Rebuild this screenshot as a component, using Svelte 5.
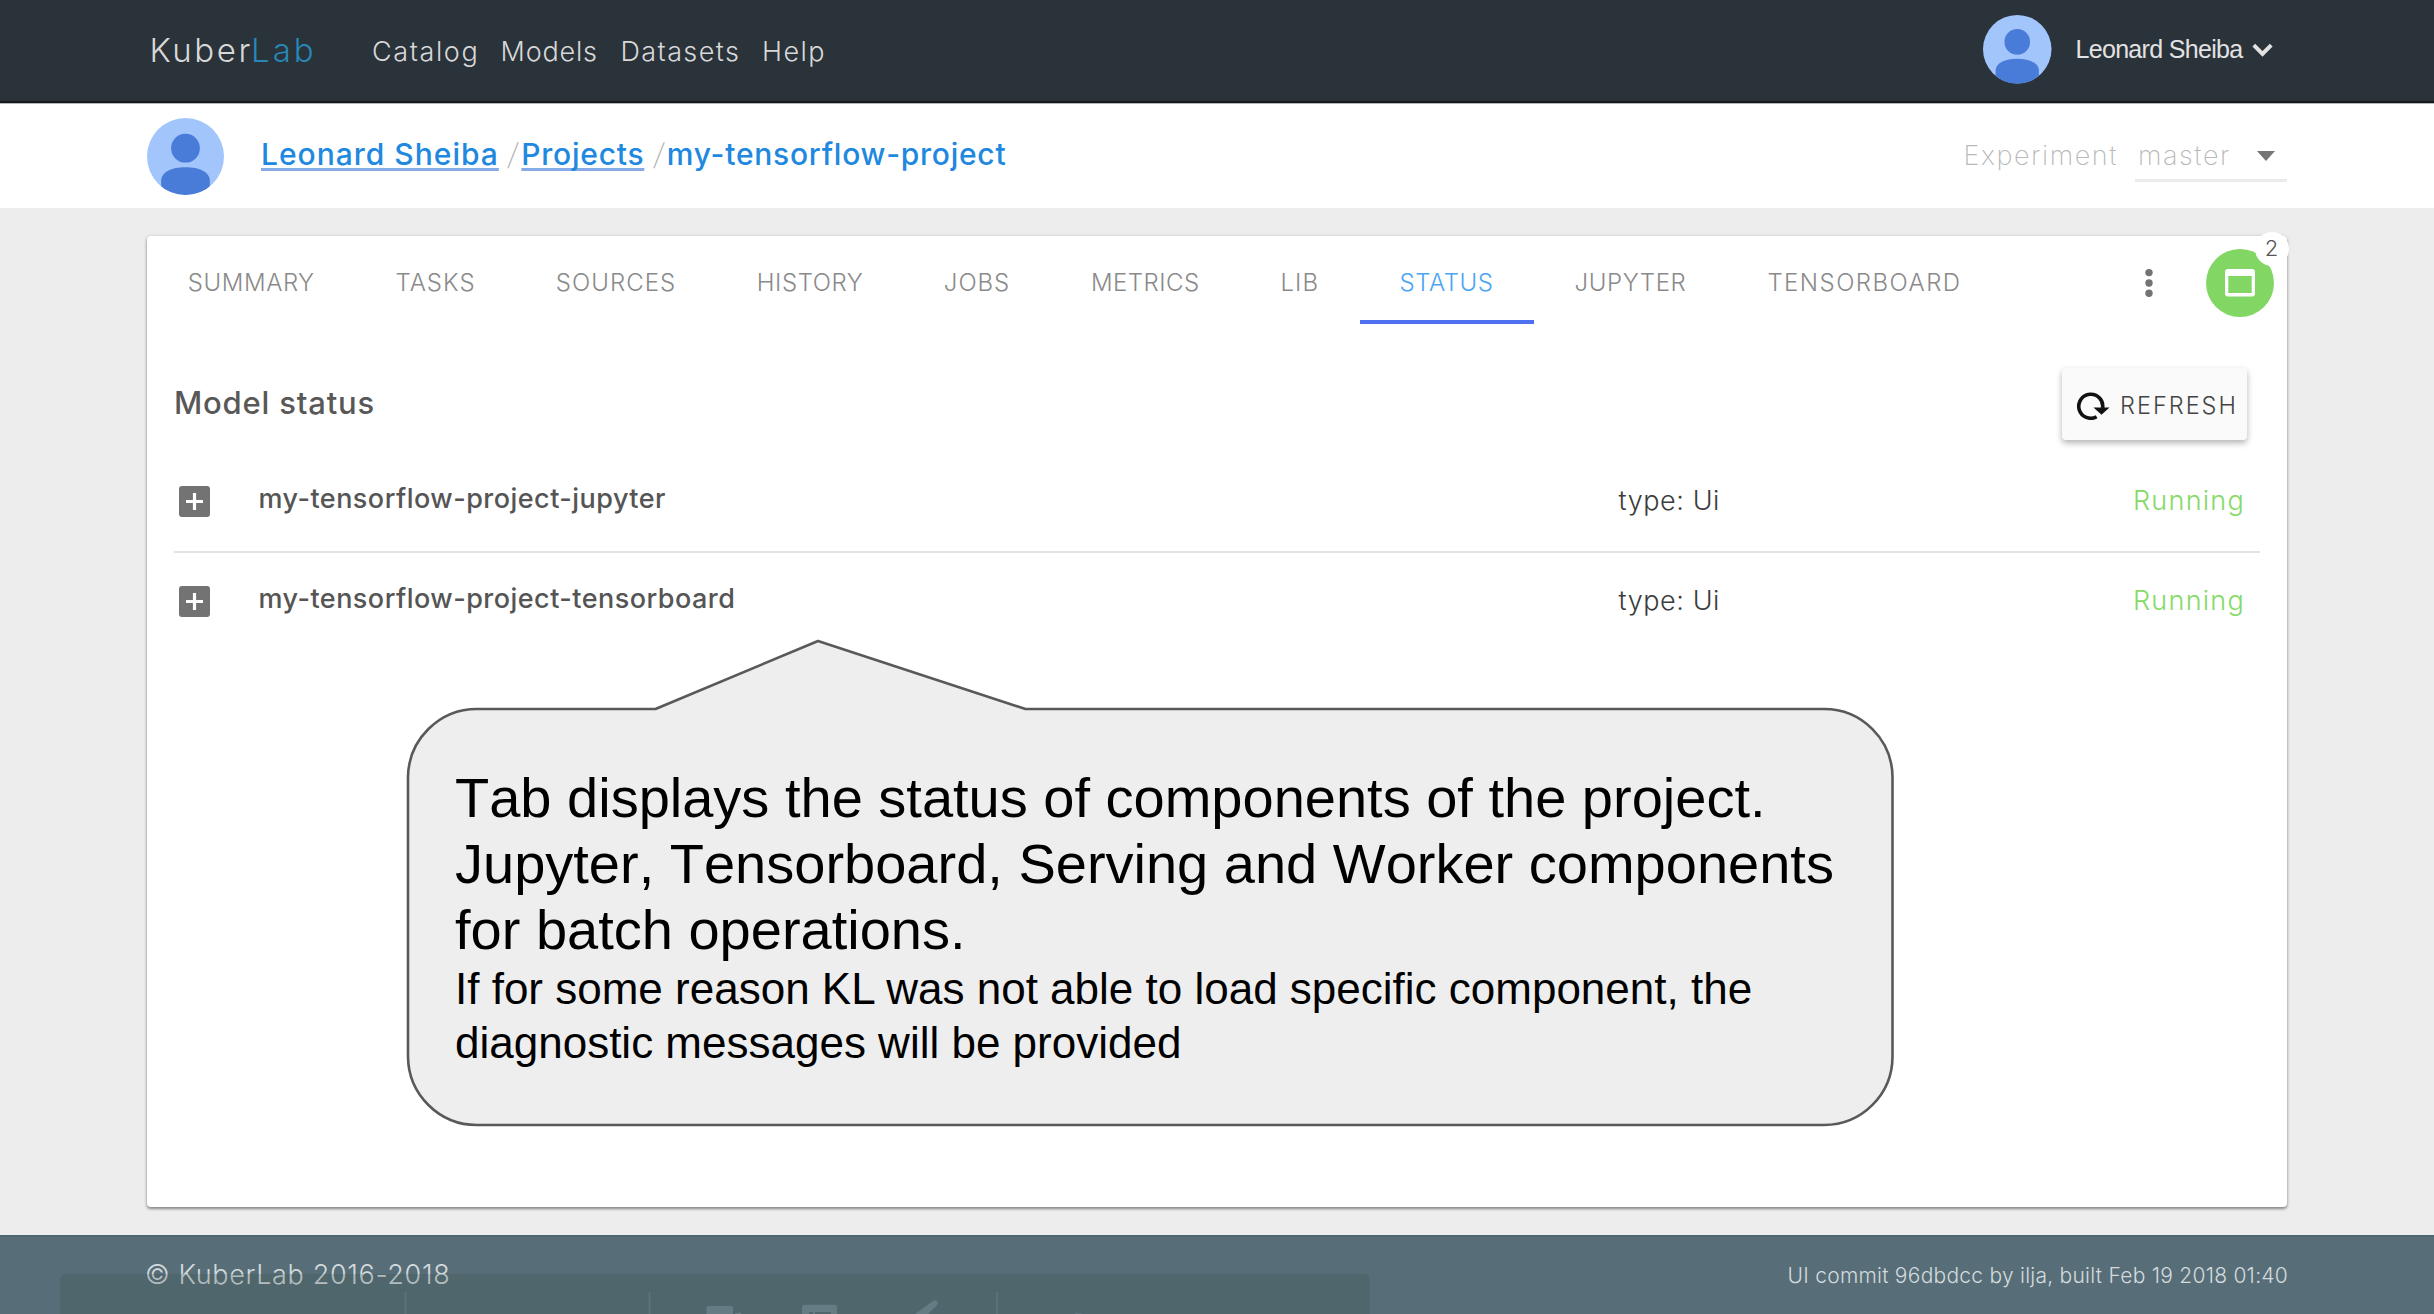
<script>
  const navLinks = [
    { label: 'Catalog', cls: 'catalog' },
    { label: 'Models', cls: 'models' },
    { label: 'Datasets', cls: 'datasets' },
    { label: 'Help', cls: 'help' }
  ];

  const tabs = [
    { label: 'SUMMARY', spacing: 0.57 },
    { label: 'TASKS', spacing: 1.02 },
    { label: 'SOURCES', spacing: 1.05 },
    { label: 'HISTORY', spacing: 0.56 },
    { label: 'JOBS', spacing: 0.93 },
    { label: 'METRICS', spacing: 0.48 },
    { label: 'LIB', spacing: 1.08 },
    { label: 'STATUS', spacing: 0.56, active: true },
    { label: 'JUPYTER', spacing: 0.61 },
    { label: 'TENSORBOARD', spacing: 1.46 }
  ];

  const components = [
    { name: 'my-tensorflow-project-jupyter', type: 'Ui', state: 'Running' },
    { name: 'my-tensorflow-project-tensorboard', type: 'Ui', state: 'Running' }
  ];
</script>

{#snippet avatar(id)}
  <svg class="avatar" viewBox="0 0 68 68" aria-hidden="true">
    <clipPath {id}><circle cx="34" cy="34" r="34" /></clipPath>
    <circle cx="34" cy="34" r="34" fill="#a2c5fb" />
    <g clip-path="url(#{id})" fill="#497bd9">
      <circle cx="34" cy="26.7" r="12.7" />
      <path d="M12.5 70V55.5C12.5 47.5 22 43.5 34 43.5S55.5 47.5 55.5 55.5V70Z" />
    </g>
  </svg>
{/snippet}

<div class="page">
  <header class="nav">
    <div class="logo"><span>Kuber</span><span class="lab">Lab</span></div>
    <nav class="links">
      {#each navLinks as link}
        <span class={link.cls}>{link.label}</span>
      {/each}
    </nav>
    <div class="user">
      {@render avatar('user-clip')}
      <span class="user-name">Leonard Sheiba</span>
      <svg class="chevron" viewBox="0 0 21 14" aria-hidden="true">
        <path d="M1.8 2.2 10.5 11 19.2 2.2" fill="none" stroke="#e2e2e2" stroke-width="4" />
      </svg>
    </div>
  </header>

  <section class="subnav">
    {@render avatar('owner-clip')}
    <div class="crumbs">
      <span class="crumb link owner">Leonard Sheiba</span>
      <span class="slash"><i>/</i></span>
      <span class="crumb link">Projects</span>
      <span class="slash"><i>/</i></span>
      <span class="crumb">my-tensorflow-project</span>
    </div>
    <div class="experiment">
      <span class="exp-label">Experiment</span>
      <div class="select">
        <span>master</span>
        <svg class="arrow" viewBox="0 0 18 10" aria-hidden="true"><path d="M0 0h18L9 10z" fill="#757575" /></svg>
      </div>
    </div>
  </section>

  <main>
    <section class="card">
      <div class="tabbar">
        <div class="tabs">
          {#each tabs as tab}
            <div class="tab" class:active={tab.active} style:letter-spacing="{tab.spacing}px">{tab.label}</div>
          {/each}
        </div>
        <div class="actions">
          <svg class="dots" viewBox="0 0 12 30" aria-hidden="true">
            <g fill="#737373"><circle cx="6" cy="4.6" r="3.7" /><circle cx="6" cy="15" r="3.7" /><circle cx="6" cy="25.3" r="3.7" /></g>
          </svg>
          <div class="fab">
            <svg class="window" viewBox="0 0 30 28" aria-hidden="true">
              <path fill="#fff" fill-rule="evenodd" d="M3 0H27Q30 0 30 3V24.5Q30 27.5 27 27.5H3Q0 27.5 0 24.5V3Q0 0 3 0ZM3.3 7V24H26.7V7Z" />
            </svg>
            <span class="badge">2</span>
          </div>
        </div>
      </div>

      <div class="heading">
        <h1>Model status</h1>
        <div class="refresh">
          <svg class="reload" viewBox="0 0 33 28" aria-hidden="true">
            <path d="M19.6 24.7A12 12 0 1 1 25.6 16" fill="none" stroke="#111" stroke-width="3.6" />
            <path d="M16.5 15.5H32.5L24.5 22.8Z" fill="#111" />
          </svg>
          <span>REFRESH</span>
        </div>
      </div>

      <div class="list">
        {#each components as item}
          <div class="row">
            <svg class="expand" viewBox="0 0 31 31" aria-hidden="true">
              <rect width="31" height="31" rx="3" fill="#737373" />
              <path d="M15.5 7V24M7 15.5H24" stroke="#fff" stroke-width="3.2" />
            </svg>
            <span class="name">{item.name}</span>
            <span class="type">type: {item.type}</span>
            <span class="state">{item.state}</span>
          </div>
        {/each}
      </div>
    </section>
  </main>

  <footer>
    <span class="copyright">© KuberLab 2016-2018</span>
    <span class="build">UI commit 96dbdcc by ilja, built Feb 19 2018 01:40</span>
    <div class="toolbar">
      <svg viewBox="0 0 1310 40" aria-hidden="true">
        <g fill="#5a727c">
          <rect x="344.5" y="18" width="2" height="22" />
          <rect x="588.5" y="18" width="2" height="22" />
          <rect x="936" y="18" width="2" height="22" />
        </g>
        <g fill="#667c84">
          <path d="M646.5 40V34Q646.5 32 648.5 32H671Q673 32 673 34V40Z" />
          <path d="M675 40V39L681 38.6V40Z" />
          <path d="M742 40V33Q742 30.7 744.5 30.7H774.5Q777 30.7 777 33V40H771V38H755V40H753V38H749V40Z" />
          <path d="M855 40 871.5 28Q874 25.5 876.5 26.5Q878.5 28.5 877 31L868 40Z" />
        </g>
        <rect x="1015" y="39" width="7" height="1" fill="#5a727c" />
      </svg>
    </div>
  </footer>

  <aside class="callout">
    <svg class="bubble" viewBox="0 0 1488 488" aria-hidden="true">
      <path
        d="M71 70H249.5L412 2L619.5 70H1418A68.5 68.5 0 0 1 1486.500 138.500V417.500A68.500 68.500 0 0 1 1418 486H71A69 69 0 0 1 2 417.500V138.500A69 69 0 0 1 71 70Z"
        fill="#eeeeee" stroke="#595959" stroke-width="2.6" stroke-linejoin="round" />
    </svg>
    <p class="lead">Tab displays the status of components of the project.<br />Jupyter, Tensorboard, Serving and Worker components<br />for batch operations.</p>
    <p class="detail">If for some reason KL was not able to load specific component, the<br />diagnostic messages will be provided</p>
  </aside>
</div>

<style>
  :global(body) {
    margin: 0;
    background: #ededed;
  }

  .page {
    position: relative;
    width: 2434px;
    height: 1314px;
    display: flex;
    flex-direction: column;
    overflow: hidden;
    background: #ededed;
    font-family: Inter, 'Liberation Sans', sans-serif;
    font-weight: 300;
    font-size: 27px;
    white-space: nowrap;
  }

  svg {
    display: block;
    flex: none;
  }

  /* Top navigation */
  .nav {
    height: 104px;
    box-sizing: border-box;
    padding: 0 161px 4px 149.5px;
    border-bottom: 1px solid #b5b7b8;
    box-shadow: inset 0 -2px 0 #15191c;
    background: #2a323a;
    color: #d8d8d8;
    display: flex;
    align-items: center;
  }

  .logo {
    width: 222.5px;
    font-size: 33px;
    letter-spacing: 2.6px;
  }

  .lab {
    color: #2887b5;
    letter-spacing: 3px;
    margin-left: -2px;
  }

  .links {
    display: flex;
    padding-top: 4px;
  }

  .catalog {
    width: 128.5px;
    letter-spacing: 1.6px;
  }

  .models {
    width: 120px;
    letter-spacing: 0.82px;
  }

  .datasets {
    width: 141.5px;
    letter-spacing: 1.39px;
  }

  .help {
    letter-spacing: 1.4px;
  }

  .user {
    margin-left: auto;
    display: flex;
    align-items: center;
    font-family: 'Liberation Sans', sans-serif;
    font-weight: 400;
    font-size: 25px;
    letter-spacing: -0.68px;
    color: #e2e2e2;
  }

  .user .avatar {
    width: 68.5px;
    height: 68.5px;
    margin-right: 23.5px;
  }

  .chevron {
    width: 21px;
    height: 14px;
    margin-left: 9.5px;
  }

  /* Breadcrumb bar */
  .subnav {
    height: 104px;
    box-sizing: border-box;
    padding: 0 147px;
    background: #fff;
    display: flex;
    align-items: center;
  }

  .subnav .avatar {
    width: 77px;
    height: 77px;
    margin: 1px 37px 0 0;
  }

  .crumbs {
    display: flex;
    align-items: center;
    padding-bottom: 4px;
    font-size: 30px;
    font-weight: 500;
    letter-spacing: 0.75px;
    color: #2088df;
  }

  .link {
    text-decoration: underline;
    text-decoration-color: #86abe8;
    text-decoration-thickness: 2.5px;
    text-decoration-skip-ink: none;
    text-underline-offset: 2.5px;
  }

  .owner {
    letter-spacing: 1px;
  }

  .slash {
    width: 22.5px;
    box-sizing: border-box;
    padding-left: 7px;
    text-align: center;
    font-weight: 200;
    color: #b5b5b5;
  }

  .slash i {
    display: inline-block;
    font-style: normal;
    transform: skewX(-7deg);
  }

  .experiment {
    margin-left: auto;
    display: flex;
    align-items: center;
    font-weight: 200;
    letter-spacing: 1.55px;
    color: #b9b9b9;
  }

  .exp-label {
    margin-right: 17px;
    padding-bottom: 1px;
  }

  .select {
    width: 152px;
    height: 52px;
    box-sizing: border-box;
    padding: 0 12px 0 3px;
    margin-top: -1px;
    border-bottom: 3px solid #ebebeb;
    display: flex;
    align-items: center;
    justify-content: space-between;
  }

  .select span {
    padding-top: 2px;
  }

  .arrow {
    width: 18px;
    height: 10px;
    margin-top: 4px;
  }

  /* Card */
  main {
    height: 1027px;
    box-sizing: border-box;
    padding: 28px 147px;
  }

  .card {
    height: 971px;
    background: #fff;
    border-radius: 4px;
    box-shadow: 0 2px 3px rgba(0, 0, 0, 0.4), 0 0 4px rgba(0, 0, 0, 0.12);
  }

  .tabbar {
    height: 88px;
    display: flex;
  }

  .tabs {
    display: grid;
    grid-template-columns: 208.5px 160px 201px 187px 147px 189.5px 119.5px 174px 194px 274px;
    font-size: 24px;
    color: #8a8a8a;
  }

  .tab {
    height: 88px;
    box-sizing: border-box;
    padding-top: 6px;
    line-height: 82px;
    text-align: center;
  }

  .active {
    color: #4aa5f5;
    box-shadow: inset 0 -4px 0 #4f70f0;
  }

  .actions {
    margin-left: auto;
    padding: 6px 13px 0 0;
    display: flex;
    align-items: center;
    gap: 51px;
  }

  .dots {
    width: 12px;
    height: 30px;
  }

  .fab {
    position: relative;
    width: 68px;
    height: 68px;
    border-radius: 50%;
    background: #82d764;
    display: flex;
    align-items: center;
    justify-content: center;
  }

  .window {
    width: 30px;
    height: 28px;
  }

  .badge {
    position: absolute;
    left: 48.5px;
    top: -17.5px;
    width: 34px;
    height: 34px;
    border-radius: 50%;
    background: #fff;
    color: #555;
    font-size: 22px;
    line-height: 33px;
    text-align: center;
  }

  .heading {
    height: 127px;
    box-sizing: border-box;
    padding: 44px 40px 11px 27px;
    display: flex;
    align-items: center;
    justify-content: space-between;
  }

  h1 {
    margin: 0;
    padding-bottom: 4px;
    font-size: 31px;
    font-weight: 500;
    letter-spacing: 0.8px;
    color: #585858;
  }

  .refresh {
    width: 185px;
    height: 72px;
    box-sizing: border-box;
    padding: 2px 0 0 15px;
    border-radius: 4px;
    background: #fafafa;
    box-shadow: 0 3px 6px rgba(0, 0, 0, 0.3);
    color: #444;
    font-size: 23.5px;
    letter-spacing: 2px;
    display: flex;
    align-items: center;
    gap: 10px;
  }

  .reload {
    width: 33px;
    height: 28px;
    margin-top: 1px;
  }

  .list {
    padding: 0 27px;
  }

  .row {
    height: 100px;
    box-sizing: border-box;
    padding: 0 15px 0 4.5px;
    display: grid;
    grid-template-columns: 80px 1360px auto 1fr;
    align-items: center;
    color: #3c3c3c;
  }

  .row + .row {
    border-top: 2px solid #e3e3e3;
    padding-bottom: 2px;
  }

  .expand {
    width: 31px;
    height: 31px;
  }

  .name {
    padding-bottom: 5px;
    font-weight: 500;
    letter-spacing: 0.47px;
    color: #555;
  }

  .type {
    padding-bottom: 2px;
    letter-spacing: 0.57px;
  }

  .state {
    padding-bottom: 2px;
    text-align: right;
    letter-spacing: 1.25px;
    color: #84da66;
  }

  /* Footer */
  footer {
    position: relative;
    height: 79px;
    box-sizing: border-box;
    padding: 0 146px 0 145px;
    background: #576e78;
    box-shadow: inset 0 2px 0 #4b6670;
    color: #d3dadd;
    display: flex;
    align-items: center;
    justify-content: space-between;
  }

  .copyright {
    padding-bottom: 1px;
    letter-spacing: 0.65px;
  }

  .build {
    padding-top: 1px;
    font-size: 21px;
    letter-spacing: 0.25px;
  }

  .toolbar {
    position: absolute;
    left: 60px;
    top: 39px;
    width: 1310px;
    height: 40px;
    border-radius: 6px 6px 0 0;
    background: rgba(52, 70, 64, 0.2);
  }

  /* Annotation bubble over the card */
  .callout {
    position: absolute;
    left: 406px;
    top: 639px;
    width: 1488px;
    height: 488px;
    box-sizing: border-box;
    padding: 126px 0 0 49px;
    font-family: 'Liberation Sans', sans-serif;
    font-weight: 400;
    color: #000;
  }

  .bubble {
    position: absolute;
    left: 0;
    top: 0;
    width: 1488px;
    height: 488px;
  }

  .callout p {
    position: relative;
    margin: 0;
  }

  .lead {
    font-size: 56px;
    line-height: 66px;
    font-kerning: none;
  }

  .callout .detail {
    margin-top: -1px;
    font-size: 44px;
    line-height: 54px;
  }
</style>
